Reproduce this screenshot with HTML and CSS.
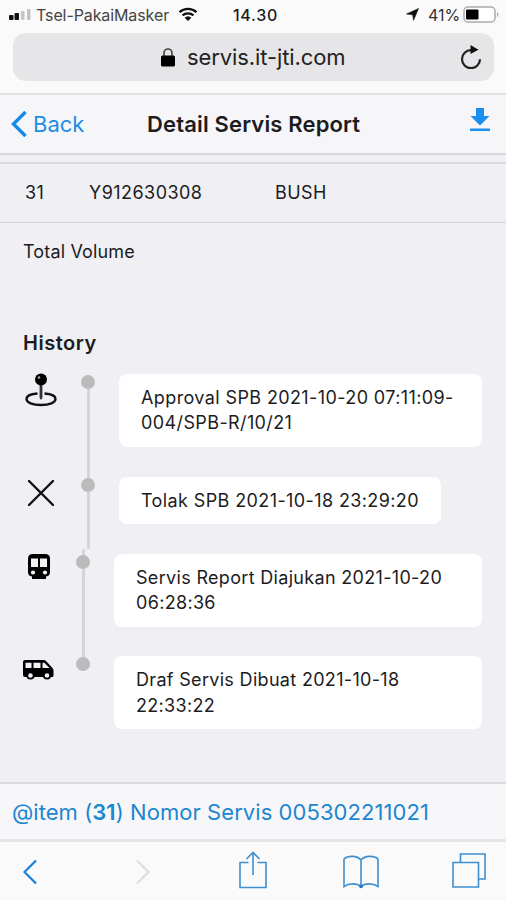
FILE: index.html
```
<!DOCTYPE html>
<html lang="id">
<head>
    <meta charset="UTF-8">
    <meta name="viewport" content="width=device-width, initial-scale=1.0">
    <title>Detail Servis Report</title>
    <link rel="stylesheet" href="styles.css">
</head>
<body>
    <!-- Status bar -->
    <div class="status-bar">
        <svg class="signal" width="24" height="12" viewBox="0 0 24 12">
            <rect x="0" y="6" width="4.5" height="5" rx="1" fill="#111"/>
            <rect x="5.500" y="4" width="4.5" height="7" rx="1" fill="#111"/>
            <rect x="12" y="2" width="3.5" height="9" rx="1" fill="#c4c4c4"/>
            <rect x="18" y="0" width="3.5" height="11" rx="1" fill="#c4c4c4"/>
        </svg>
        <span class="carrier">Tsel-PakaiMasker</span>
        <svg class="wifi" width="20" height="15" viewBox="0 0 20 15">
            <path d="M1.5 5.2a12.5 12.5 0 0 1 17 0M4.5 8.4a8.3 8.3 0 0 1 11 0" fill="none" stroke="#111" stroke-width="2.3"/>
            <path d="M10 14 6.6 10.8a5 5 0 0 1 6.8 0z" fill="#111"/>
        </svg>
        <span class="clock">14.30</span>
        <svg class="location" width="13" height="13" viewBox="0 0 13 13">
            <path d="M12.5.5 7.6 12.3 6.6 6.7.5 6z" fill="#111" stroke="#111" stroke-width=".6"/>
        </svg>
        <span class="percent">41%</span>
        <svg class="battery" width="36" height="18" viewBox="0 0 36 18">
            <rect x="1" y="1" width="31" height="15" rx="4" fill="#fff" stroke="#aaa" stroke-width="1.5"/>
            <rect x="3" y="3.5" width="12.5" height="10" rx="1" fill="#000"/>
            <path d="M34 6v5q1.500-1 1.500-2.500T34 6z" fill="#aaa"/>
        </svg>
    </div>

    <!-- Address bar -->
    <div class="address-area">
        <div class="address-bar">
            <svg class="lock" width="14" height="19" viewBox="0 0 14 19">
                <path d="M3 9V5a4 4 0 0 1 8 0v4" fill="none" stroke="#444" stroke-width="1.6"/>
                <rect x="0" y="7.500" width="14" height="11" rx="1.500" fill="#000"/>
            </svg>
            <span class="url">servis.it-jti.com</span>
            <svg class="reload" width="22" height="24" viewBox="0 0 22 24">
                <path d="M14 5.200H11a9 9 0 1 0 9 9" fill="none" stroke="#222" stroke-width="2.200"/>
                <path d="M10.500 0 18.500 4.700 10.500 9z" fill="#111"/>
            </svg>
        </div>
    </div>

    <!-- Navbar -->
    <div class="navbar">
        <a class="back" href="#">
            <svg width="17" height="28" viewBox="0 0 17 28">
                <path d="M15.500 2 3.500 14l12 12" fill="none" stroke="#138bea" stroke-width="3.400"/>
            </svg>
            <span>Back</span>
        </a>
        <h1 class="title">Detail Servis Report</h1>
        <a class="download" href="#">
            <svg width="20" height="24" viewBox="0 0 20 24">
                <path d="M6 0h8v8h5.500L10 17.500.500 8H6zM0 20.500h20V23H0z" fill="#1990f0"/>
            </svg>
        </a>
    </div>

    <div class="content">
        <div class="table-row">
            <span class="col-no">31</span>
            <span class="col-code">Y912630308</span>
            <span class="col-name">BUSH</span>
        </div>
        <div class="total">Total Volume</div>
        <h2 class="block-title">History</h2>

        <div class="timeline">
            <div class="timeline-item">
                <div class="timeline-icon">
                    <svg width="32" height="34" viewBox="0 0 32 34">
                        <path d="M12.500 20.500C5 21 1.500 23 1.500 26c0 3.500 6 6 14.500 6s14.500-2.500 14.500-6c0-3-3.500-5-11-5.500" fill="none" stroke="#111" stroke-width="2.400"/>
                        <path d="M14.600 10h2.800v15l-1.400 2-1.400-2z" fill="#333"/>
                        <circle cx="16" cy="6.500" r="6" fill="#000"/>
                        <circle cx="14" cy="4.500" r="1.300" fill="#aaa"/>
                    </svg>
                </div>
                <div class="divider first"><span class="dot"></span></div>
                <div class="card">Approval SPB 2021-10-20 07:11:09-004/SPB-R/10/21</div>
            </div>
            <div class="timeline-item">
                <div class="timeline-icon reject">
                    <svg width="28" height="28" viewBox="0 0 28 28">
                        <path d="m2 2 24 24M26 2 2 26" fill="none" stroke="#111" stroke-width="2.400" stroke-linecap="round"/>
                    </svg>
                </div>
                <div class="divider"><span class="dot"></span></div>
                <div class="card">Tolak SPB 2021-10-18 23:29:20</div>
            </div>
            <div class="timeline-item narrow">
                <div class="timeline-icon train">
                    <svg width="22" height="26" viewBox="0 0 22 26">
                        <path d="M5 0h12q5 0 5 4.500V18q0 4-4 4.500V25H4v-2.500Q0 22 0 18V4.500Q0 0 5 0z" fill="#000"/>
                        <path d="M3 4.500h7V13H3zM12 4.500h7V13h-7z" fill="#f2f2f5"/>
                        <circle cx="5" cy="18.500" r="2.100" fill="#f2f2f5"/>
                        <circle cx="17" cy="18.500" r="2.100" fill="#f2f2f5"/>
                    </svg>
                </div>
                <div class="divider"><span class="dot"></span></div>
                <div class="card">Servis Report Diajukan 2021-10-20 06:28:36</div>
            </div>
            <div class="timeline-item narrow">
                <div class="timeline-icon van">
                    <svg width="31" height="20" viewBox="0 0 31 20">
                        <path d="M2 0h18.500q1.500 0 2.500 1l6.500 7q1 1 1 2.500v5q0 1.500-1.500 1.500H2q-2 0-2-2V2Q0 0 2 0z" fill="#000"/>
                        <path d="M2.500 2.800h6V8h-6zM10.500 2.800h7V8h-7zM19.500 2.800h1.800L26.500 8h-7z" fill="#f2f2f5"/>
                        <circle cx="7.500" cy="15.500" r="3.200" fill="#f2f2f5" stroke="#000" stroke-width="1.800"/>
                        <circle cx="24" cy="15.500" r="3.200" fill="#f2f2f5" stroke="#000" stroke-width="1.800"/>
                    </svg>
                </div>
                <div class="divider last"><span class="dot"></span></div>
                <div class="card">Draf Servis Dibuat 2021-10-18 22:33:22</div>
            </div>
        </div>
    </div>

    <div class="item-bar">@item (<b>31</b>) Nomor Servis 005302211021</div>

    <!-- Browser toolbar -->
    <div class="toolbar">
        <svg class="prev" width="14" height="26" viewBox="0 0 14 26">
            <path d="M13 1.500 1.500 13 13 24.500" fill="none" stroke="#187fd8" stroke-width="2.200"/>
        </svg>
        <svg class="next" width="14" height="26" viewBox="0 0 14 26">
            <path d="M1 1.500 12.500 13 1 24.500" fill="none" stroke="#dcdcde" stroke-width="2"/>
        </svg>
        <svg class="share" width="28" height="38" viewBox="0 0 28 38">
            <path d="M9.500 11.500H1V36.500h26V11.500h-8.500M14 24V1.500M7.500 8 14 1.500 20.500 8" fill="none" stroke="#3f8fce" stroke-width="1.600"/>
        </svg>
        <svg class="book" width="36" height="34" viewBox="0 0 36 34">
            <path d="M18 5C14 .300 5 .300 1 4v27.500c5-3.500 13-3.500 17 0 4-3.500 12-3.500 17 0V4c-4-3.700-13-3.700-17 1zV31" fill="none" stroke="#3f8fce" stroke-width="1.600"/>
            <circle cx="18" cy="31.500" r="1.800" fill="#1a75d0"/>
        </svg>
        <svg class="tabs" width="34" height="35" viewBox="0 0 34 35">
            <path d="M1 9.500h25.500V34H1zM8.500 9V1H33v25h-6" fill="none" stroke="#3f8fce" stroke-width="1.600"/>
        </svg>
    </div>
</body>
</html>
```
FILE: styles.css
```
* {
    box-sizing: border-box;
}

body {
    margin: 0;
    height: 900px;
    display: flex;
    flex-direction: column;
    overflow: hidden;
    font-family: Inter, "Liberation Sans", sans-serif;
    color: #1c1c1e;
    background-color: #efeff4;
}

svg {
    display: block;
    flex: none;
}

a {
    text-decoration: none;
    color: #1c8de6;
}

/* Status bar */
.status-bar {
    height: 29px;
    display: flex;
    align-items: center;
    padding: 0 7px 0 9px;
    background-color: #fafafa;
    font-size: 16px;
    white-space: nowrap;
}

.carrier {
    width: 134px;
    margin-left: 3px;
    color: #444;
    letter-spacing: -0.1px;
}

.wifi {
    margin-left: 8px;
}

.clock {
    width: 46px;
    margin-left: 35px;
    font-weight: 500;
    letter-spacing: 0.7px;
}

.location {
    margin-left: auto;
}

.percent {
    width: 32px;
    margin: 0 3px 0 9px;
    color: #333;
}

/* Address bar */
.address-area {
    height: 66px;
    padding: 4px 12px 0 13px;
    background-color: #fafafa;
    border-bottom: 2px solid #e2e2e4;
}

.address-bar {
    height: 48px;
    display: flex;
    align-items: center;
    padding: 0 12px 0 148px;
    border-radius: 13px;
    background-color: #e6e6e8;
}

.url {
    margin-left: 12px;
    font-size: 22px;
    color: #222;
    letter-spacing: -0.1px;
    white-space: nowrap;
}

.reload {
    margin-left: auto;
}

/* Navbar */
.navbar {
    height: 60px;
    display: flex;
    align-items: center;
    padding: 0 16px 0 10px;
    background-color: #f6f6f8;
    border-bottom: 2px solid #d8d8dc;
}

.back {
    width: 137px;
    display: flex;
    align-items: center;
    gap: 6px;
    font-size: 22px;
}

.title {
    margin: 0;
    font-size: 22px;
    font-weight: 600;
    letter-spacing: 0.15px;
    white-space: nowrap;
}

.download {
    margin: 0 0 9px auto;
}

/* Page content */
.content {
    flex: 1;
    padding-top: 7px;
}

.table-row {
    height: 61px;
    display: grid;
    grid-template-columns: 64px 186px 1fr;
    align-items: center;
    padding: 0 0 2px 25px;
    border-top: 2px solid #dadade;
    border-bottom: 1px solid #d4d4d8;
    font-size: 18px;
    letter-spacing: 0.45px;
}

.total {
    padding: 16px 23px 0;
    font-size: 18px;
    line-height: 26px;
    letter-spacing: 0.15px;
}

.block-title {
    margin: 64px 23px 0;
    font-size: 20px;
    font-weight: 600;
    line-height: 28px;
    letter-spacing: 0.5px;
}

/* Timeline */
.timeline {
    margin-top: 12px;
}

.timeline-item {
    display: grid;
    grid-template-columns: 56px 14px 1fr;
    padding: 0 24px 0 25px;
}

.timeline-item.narrow {
    grid-template-columns: 53px 14px 1fr;
    padding-left: 23px;
}

.timeline-icon {
    padding-top: 4px;
}

.timeline-icon.reject {
    padding: 7px 0 0 2px;
}

.timeline-icon.train {
    padding: 5px 0 0 5px;
}

.timeline-icon.van {
    padding-top: 9px;
}

/* Line is split above and below the dot */
.divider {
    display: flex;
    flex-direction: column;
    align-items: center;
}

.divider::before,
.divider::after {
    content: "";
    width: 3px;
    background-color: #d5d5d8;
}

.divider::before {
    height: 6px;
}

.divider::after {
    flex: 1;
}

.divider.first::before,
.divider.last::after {
    background-color: transparent;
}

.dot {
    width: 14px;
    height: 14px;
    border-radius: 50%;
    background-color: #bbb;
}

.card {
    justify-self: start;
    margin: 5px 0 24.8px 24px;
    padding: 11px 22px;
    border-radius: 8px;
    background-color: #fff;
    font-size: 18px;
    line-height: 25.4px;
    letter-spacing: 0.39px;
}

.narrow .card {
    letter-spacing: 0.32px;
}

/* Bottom bars */
.item-bar {
    height: 57px;
    padding-left: 12px;
    line-height: 56px;
    font-size: 22px;
    color: #1c86d1;
    background-color: #f7f7f9;
    border-top: 2px solid #dadadf;
    letter-spacing: 0.06px;
    white-space: nowrap;
}

.item-bar b {
    font-weight: 600;
}

.toolbar {
    height: 61px;
    display: flex;
    align-items: center;
    padding: 2px 20px 0 23px;
    background-color: #fafafa;
    border-top: 3px solid #e6e6e8;
}

.next {
    margin-left: 99px;
}

.share {
    margin: 0 76px 4px 89px;
}

.tabs {
    margin: 0 0 3px auto;
}
```
